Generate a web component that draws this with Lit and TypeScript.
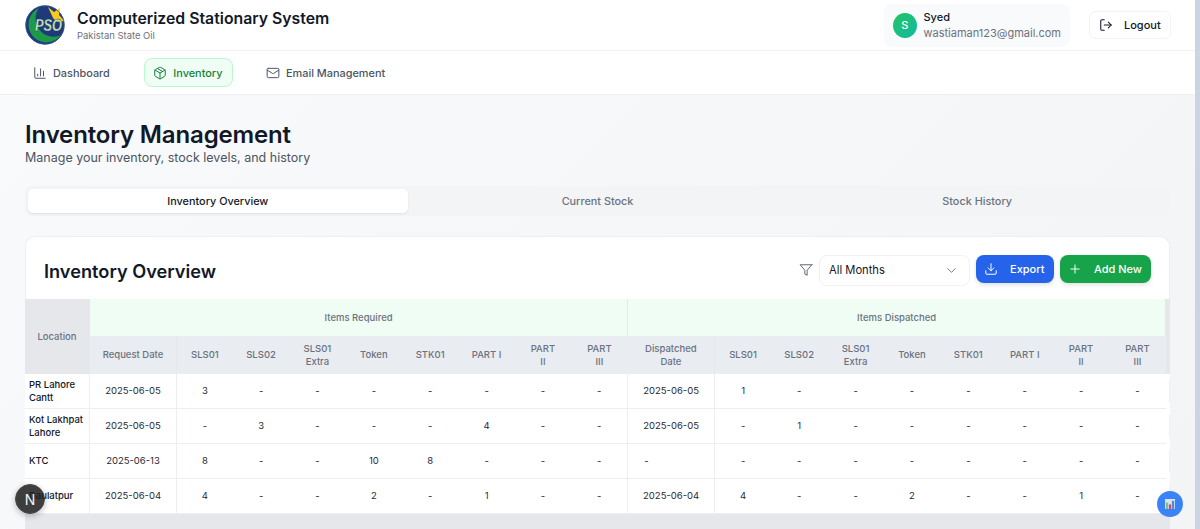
import { LitElement, html, css, svg } from "lit";
import { customElement } from "lit/decorators.js";

const rows = [
  ["PR Lahore Cantt", "2025-06-05", "3", "-", "-", "-", "-", "-", "-", "-", "2025-06-05", "1", "-", "-", "-", "-", "-", "-", "-"],
  ["Kot Lakhpat Lahore", "2025-06-05", "-", "3", "-", "-", "-", "4", "-", "-", "2025-06-05", "-", "1", "-", "-", "-", "-", "-", "-"],
  ["KTC", "2025-06-13", "8", "-", "-", "10", "8", "-", "-", "-", "-", "-", "-", "-", "-", "-", "-", "-", "-"],
  ["Daulatpur", "2025-06-04", "4", "-", "-", "2", "-", "1", "-", "-", "2025-06-04", "4", "-", "-", "2", "-", "-", "1", "-"],
];
const items = ["SLS01", "SLS02", "SLS01 Extra", "Token", "STK01", "PART I", "PART II", "PART III"];

@customElement("app-root")
export class AppRoot extends LitElement {
  static styles = css`
    :host { display: block; height: 529px; overflow: hidden; position: relative; font-family: Inter, "Liberation Sans", sans-serif; color: #111827; background: linear-gradient(135deg, #f9fafb, #f3f4f6); }
    svg { display: block; flex: none; overflow: visible; }
    header { height: 50px; background: #fff; border-bottom: 1px solid #f0f1f3; display: flex; align-items: center; justify-content: space-between; padding: 0 29px 0 25px; box-sizing: content-box; }
    .brand { display: flex; align-items: center; gap: 12px; }
    .brand h1 { margin: 0; font-size: 15.8px; line-height: 20px; font-weight: 600; }
    .brand p { margin: 0; font-size: 9.45px; line-height: 13px; color: #6b7280; }
    .logotext { font: italic 700 16px "Liberation Sans", sans-serif; fill: #cdeab5; stroke: #12306b; stroke-width: 0.3px; }
    .right { display: flex; align-items: center; gap: 19px; }
    .user { width: 186px; height: 43px; box-sizing: border-box; padding: 0 9px; background: #f9fafb; border-radius: 8px; display: flex; align-items: center; gap: 7px; }
    .avatar { width: 25px; height: 25px; border-radius: 50%; background: linear-gradient(135deg, #22c55e, #14b8a6); color: #fff; font-size: 11px; font-weight: 500; display: flex; align-items: center; justify-content: center; }
    .uname { font-size: 11px; line-height: 16px; font-weight: 500; }
    .email { font-size: 11px; line-height: 16px; color: #6b7280; }
    .logout { width: 82px; height: 28px; box-sizing: border-box; border: 1px solid #f1f3f6; background: #fff; border-radius: 6px; display: flex; align-items: center; gap: 11px; padding-left: 9px; font-size: 11px; font-weight: 500; }
    nav { height: 43px; background: #fff; border-bottom: 1px solid #eeeff2; display: flex; align-items: center; padding-left: 24px; gap: 24.5px; }
    .nav { height: 29px; box-sizing: border-box; display: flex; align-items: center; gap: 6px; padding: 0 9px 0 8px; font-size: 10.9px; font-weight: 500; color: #4b5563; border-radius: 8px; border: 1px solid transparent; }
    .nav.on { color: #15803d; background: #f0fdf4; border-color: #bbf7d0; }
    main { padding: 27px 30px 0 25px; }
    h2 { margin: 0; font-size: 24px; line-height: 26px; font-weight: 600; color: #111827; letter-spacing: -0.15px; }
    .sub { margin: 1px 0 20px; font-size: 12.5px; line-height: 17px; color: #4b5563; }
    .tabs { height: 30px; box-sizing: border-box; background: #f3f4f6; border-radius: 6px; padding: 3px; display: grid; grid-template-columns: repeat(3, 1fr); }
    .tab { display: flex; align-items: center; justify-content: center; font-size: 10.85px; font-weight: 500; color: #6b7280; border-radius: 5px; }
    .tab.on { background: #fff; color: #111827; box-shadow: 0 1px 2px rgba(0,0,0,.08); }
    .card { margin-top: 20px; background: #fff; box-shadow: inset 0 0 0 1px #eceef1; border-radius: 10px 10px 0 0; overflow: hidden; }
    .cardhead { height: 63px; box-sizing: border-box; display: flex; align-items: center; padding: 5px 19px 0 19px; }
    .cardhead h3 { margin: 1px 0 0; flex: 1; font-size: 18.2px; font-weight: 600; color: #111827; }
    .select { width: 151px; height: 31px; box-sizing: border-box; margin: 0 6px 0 6px; border: 1px solid #f0f1f4; background: #fff; border-radius: 8px; display: flex; align-items: center; justify-content: space-between; padding: 0 10px 0 9px; font-size: 11.2px; }
    .btn { height: 28px; box-sizing: border-box; border-radius: 8px; color: #fff; display: flex; align-items: center; gap: 12px; padding: 0 8px; font-size: 11px; font-weight: 500; margin-bottom: 2px; white-space: nowrap; box-shadow: 0 2px 4px rgba(0,0,0,.12); }
    .export { background: #2563eb; width: 78px; margin-right: 6px; }
    .add { background: #16a34a; width: 91px; }
    .wrap { background: #e5e7eb; height: 230px; }
    table { width: 1145px; table-layout: fixed; border-collapse: collapse; font-size: 9.5px; background: #fff; }
    col.c { width: 56.375px; }
    col.loc { width: 64.5px; }
    col.dt { width: 87px; }
    col.edge { width: 4.5px; }
    th { font-weight: 500; color: #6b7280; background: #e9ecf1; padding: 1px 12px 0; line-height: 12.5px; text-align: center; height: 38px; box-sizing: border-box; border-right: 1px solid #e5e7eb; }
    th.nb { border-right: 0; padding: 1px 13px 0; }
    th.locth { background: #e5e7eb; }
    th.grp { background: #f0fdf4; height: 37px; padding: 1px 12px 0; border-right: 1px solid #e5e7eb; }
    th.edgeth { background: #e5e7eb; padding: 0; border: 0; }
    td { height: 34.8px; box-sizing: border-box; padding: 1px 4px 0; text-align: center; line-height: 12.5px; color: #1f2937; border-bottom: 1px solid #eceef2; font-size: 9.5px; }
    td.sep { border-right: 1px solid #eceef2; }
    td.l { text-align: left; padding-left: 4px; color: #111827; font-weight: 500; }
    td.left { text-align: left; padding-left: 16px; }
    td.edgetd { padding: 0 0 0 3px; border-bottom: 0; }
    .stub { width: 2px; height: 24px; box-sizing: border-box; border: 1px solid #eff1f4; border-right: 0; border-radius: 4px 0 0 4px; }
    .sb { position: absolute; right: 0; top: 0; bottom: 0; width: 5px; background: #cbd5e1; }
    .next { position: absolute; left: 15px; top: 484px; width: 30px; height: 30px; box-sizing: border-box; border-radius: 50%; background: rgba(30,30,30,.86); border: 1px solid #4a4a4a; box-shadow: 0 2px 6px rgba(0,0,0,.25); color: #f3f4f6; font-size: 14px; font-weight: 400; display: flex; align-items: center; justify-content: center; }
    .fab { position: absolute; left: 1157px; top: 491px; width: 26px; height: 26px; border-radius: 50%; background: #3b82f6; display: flex; align-items: center; justify-content: center; }
  `;

  icon(p: unknown, size = 14, color = "currentColor", w = 1.7) {
    return html`<svg width=${size} height=${size} viewBox="0 0 24 24" fill="none" stroke=${color} stroke-width=${w} stroke-linecap="round" stroke-linejoin="round">${p}</svg>`;
  }

  render() {
    return html`
      <header>
        <div class="brand">
          <svg width="40" height="40" viewBox="0 0 40 40">
            <circle cx="20" cy="20" r="19.5" fill="#1f3a7a"/>
            <path d="M23 2 L29 7 L35 3 L34 10 L39.5 16 L32 17 L28 13 Z" fill="#f5c91e"/>
            <path d="M14 3 A18 18 0 1 0 36 30 A18 18 0 0 1 14 3Z" fill="#1c9a4a"/>
            <circle cx="20" cy="20" r="19.2" fill="none" stroke="#3a5590" stroke-width="0.8"/>
            <text x="10" y="25.5" class="logotext" textLength="27" lengthAdjust="spacingAndGlyphs">PSO</text>
          </svg>
          <div><h1>Computerized Stationary System</h1><p>Pakistan State Oil</p></div>
        </div>
        <div class="right">
          <div class="user"><div class="avatar">S</div><div><div class="uname">Syed</div><div class="email">wastiaman123@gmail.com</div></div></div>
          <div class="logout">${this.icon(svg`<path d="M9 21H5a2 2 0 0 1-2-2V5a2 2 0 0 1 2-2h4"/><path d="m16 17 5-5-5-5"/><path d="M21 12H9"/>`, 14, "#111827", 1.8)}Logout</div>
        </div>
      </header>
      <nav>
        <div class="nav">${this.icon(svg`<path d="M3 3v16a2 2 0 0 0 2 2h16"/><path d="M18 17V9"/><path d="M13 17V5"/><path d="M8 17v-3"/>`)}Dashboard</div>
        <div class="nav on">${this.icon(svg`<path d="M21 8a2 2 0 0 0-1-1.73l-7-4a2 2 0 0 0-2 0l-7 4A2 2 0 0 0 3 8v8a2 2 0 0 0 1 1.73l7 4a2 2 0 0 0 2 0l7-4A2 2 0 0 0 21 16Z"/><path d="m3.3 7 8.7 5 8.7-5"/><path d="M12 22V12"/><path d="m7.5 4.27 9 5.15"/>`)}Inventory</div>
        <div class="nav">${this.icon(svg`<rect width="20" height="16" x="2" y="4" rx="2"/><path d="m22 7-8.97 5.7a1.94 1.94 0 0 1-2.06 0L2 7"/>`)}Email Management</div>
      </nav>
      <main>
        <h2>Inventory Management</h2>
        <p class="sub">Manage your inventory, stock levels, and history</p>
        <div class="tabs"><div class="tab on">Inventory Overview</div><div class="tab">Current Stock</div><div class="tab">Stock History</div></div>
        <div class="card">
          <div class="cardhead">
            <h3>Inventory Overview</h3>
            ${this.icon(svg`<path d="M22 3H2l8 9.46V19l4 2v-8.54L22 3z"/>`, 14, "#4b5563", 1.5)}
            <div class="select">All Months ${this.icon(svg`<path d="m6 9 6 6 6-6"/>`, 15, "#6b7280", 1.5)}</div>
            <div class="btn export">${this.icon(svg`<path d="M21 15v4a2 2 0 0 1-2 2H5a2 2 0 0 1-2-2v-4"/><path d="m7 10 5 5 5-5"/><path d="M12 15V3"/>`, 14, "#fff")}Export</div>
            <div class="btn add">${this.icon(svg`<path d="M5 12h14"/><path d="M12 5v14"/>`, 14, "#fff")}Add New</div>
          </div>
          <div class="wrap">
            <table>
              <colgroup>
                <col class="loc"/><col class="dt"/>${items.map(() => html`<col class="c"/>`)}
                <col class="dt"/>${items.map(() => html`<col class="c"/>`)}<col class="edge"/>
              </colgroup>
              <thead>
                <tr><th class="locth" rowspan="2">Location</th><th class="grp" colspan="9">Items Required</th><th class="grp nb" colspan="9">Items Dispatched</th><th class="edgeth" rowspan="2"></th></tr>
                <tr>
                  <th>Request Date</th>${items.map((i) => html`<th class="nb">${i}</th>`)}
                  <th>Dispatched Date</th>${items.map((i) => html`<th class="nb">${i}</th>`)}
                </tr>
              </thead>
              <tbody>
                ${rows.map((r) => html`<tr>${r.map((v, i) => {
                  const sep = i === 0 || i === 1 || i === 9 || i === 10 ? "sep" : "";
                  const cls = i === 0 ? "l sep" : i === 10 && v === "-" ? "left sep" : sep;
                  return html`<td class=${cls}>${v}</td>`;
                })}<td class="edgetd"><div class="stub"></div></td></tr>`)}
              </tbody>
            </table>
          </div>
        </div>
      </main>
      <div class="sb"></div>
      <div class="next">N</div>
      <div class="fab">
        <svg width="10" height="10" viewBox="0 0 11 11"><rect x="0" y="0" width="11" height="11" fill="#d7e3ef"/><rect x="1" y="4" width="2.5" height="7" fill="#7cc576"/><rect x="4.3" y="6" width="2.5" height="5" fill="#e6387e"/><rect x="7.6" y="2" width="2.5" height="9" fill="#4a90c8"/></svg>
      </div>
    `;
  }
}
